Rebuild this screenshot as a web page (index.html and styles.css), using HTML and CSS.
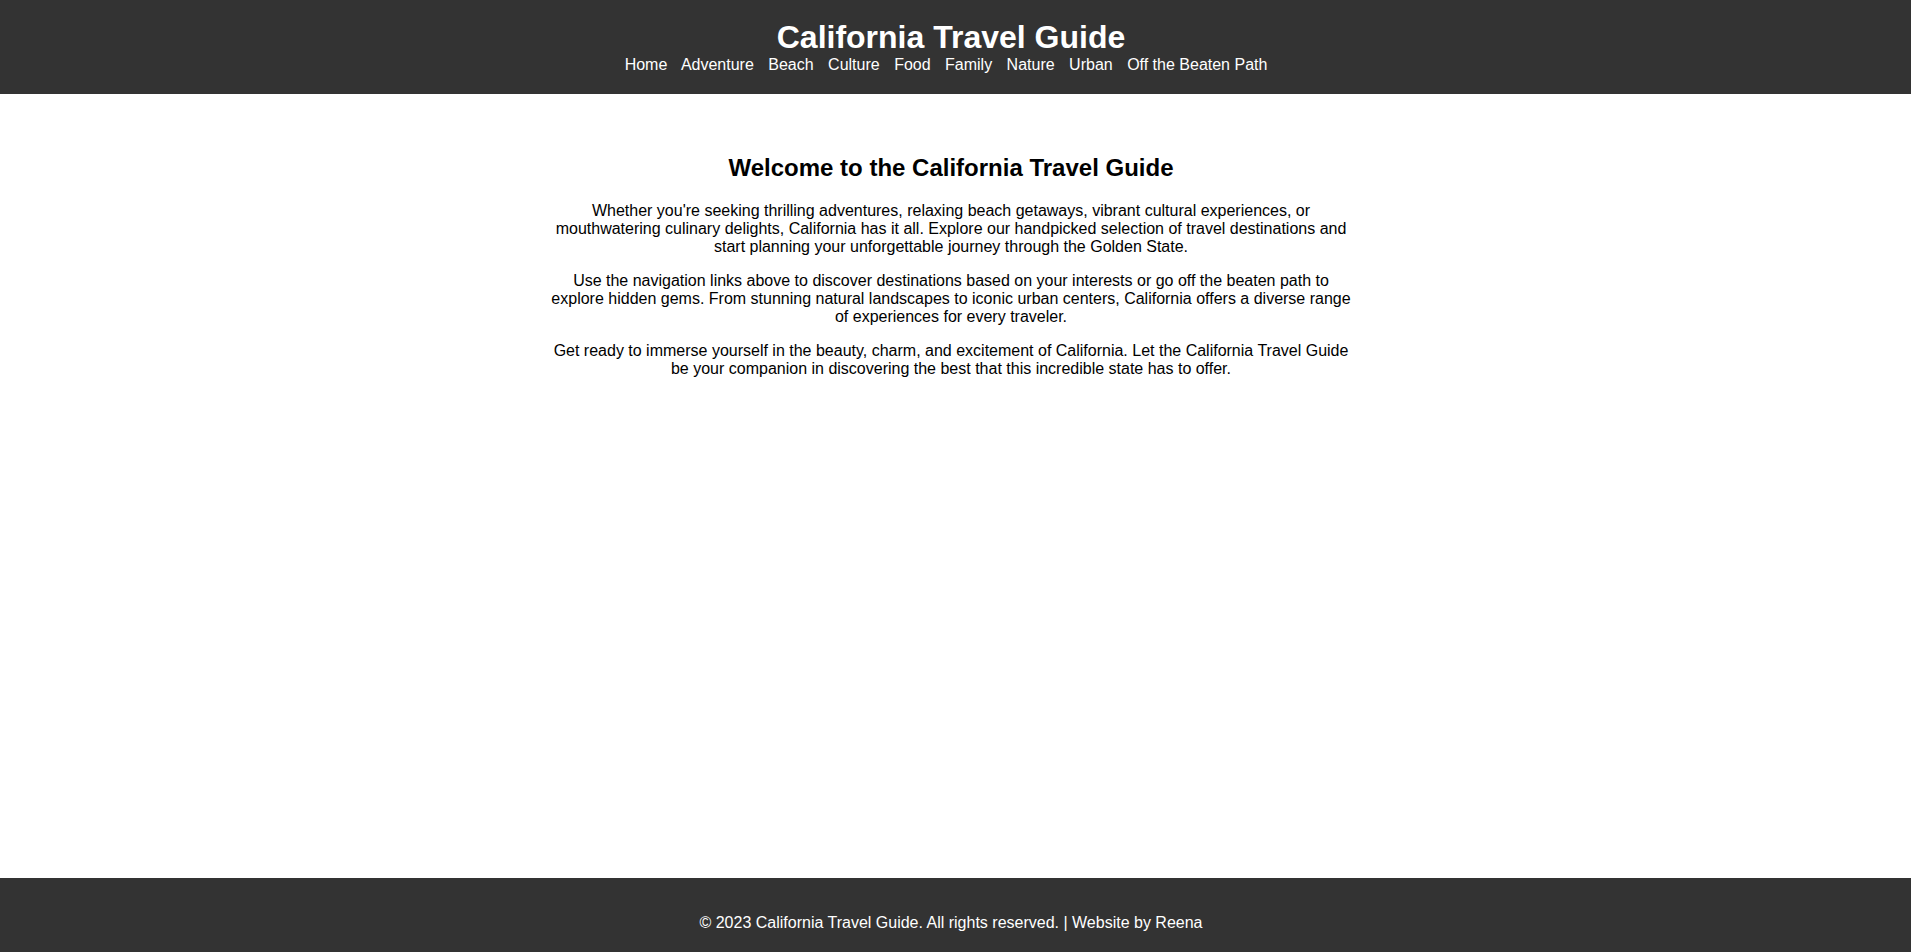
FILE: index.html
```html
<!DOCTYPE html>
<html lang="en">
<head>
<meta charset="utf-8">
<title>California Travel Guide</title>
<link rel="stylesheet" href="styles.css">
</head>
<body>
<header class="site-header">
  <h1 class="site-title">California Travel Guide</h1>
  <nav class="site-nav">
    <a href="#">Home</a>
    <a href="#">Adventure</a>
    <a href="#">Beach</a>
    <a href="#">Culture</a>
    <a href="#">Food</a>
    <a href="#">Family</a>
    <a href="#">Nature</a>
    <a href="#">Urban</a>
    <a href="#">Off the Beaten Path</a>
  </nav>
</header>
<main class="site-main">
  <section class="intro">
    <h2 class="intro-title">Welcome to the California Travel Guide</h2>
    <p>Whether you're seeking thrilling adventures, relaxing beach getaways, vibrant cultural experiences, or mouthwatering culinary delights, California has it all. Explore our handpicked selection of travel destinations and start planning your unforgettable journey through the Golden State.</p>
    <p>Use the navigation links above to discover destinations based on your interests or go off the beaten path to explore hidden gems. From stunning natural landscapes to iconic urban centers, California offers a diverse range of experiences for every traveler.</p>
    <p>Get ready to immerse yourself in the beauty, charm, and excitement of California. Let the California Travel Guide be your companion in discovering the best that this incredible state has to offer.</p>
  </section>
</main>
<footer class="site-footer">
  <p>&copy; 2023 California Travel Guide. All rights reserved. | Website by Reena</p>
</footer>
</body>
</html>
```
FILE: styles.css
```css
html, body {
  margin: 0;
  padding: 0;
}

body {
  font-family: "Liberation Sans", Arial, sans-serif;
  font-size: 16px;
  color: #000;
  background: #fff;
}

.site-header {
  background: #333;
  color: #fff;
  text-align: center;
  padding: 19px 9px 20px 0;
}

.site-title {
  margin: 0;
  font-size: 32px;
  font-weight: bold;
}

.site-nav a {
  color: #fff;
  text-decoration: none;
  margin-right: 10px;
}

.site-main {
  box-sizing: border-box;
  min-height: 784px;
  padding: 40px 29px 20px 20px;
}

.intro {
  max-width: 800px;
  margin: 0 auto;
  text-align: center;
}

.intro-title {
  font-size: 24px;
  margin: 0.83em 0;
}

.intro p {
  margin: 16px 0;
}

.site-footer {
  background: #333;
  color: #fff;
  text-align: center;
  padding: 20px 29px 20px 20px;
}

.site-footer p {
  margin: 16px 0;
}
```
